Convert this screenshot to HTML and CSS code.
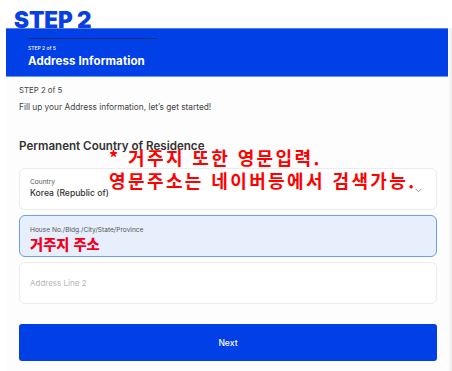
FILE: index.html
```html
<!DOCTYPE html>
<html lang="ko">
<head>
<meta charset="utf-8">
<title>Address Information</title>
<link rel="stylesheet" href="styles.css">
</head>
<body>
<div class="shot">
  <div class="step-title">STEP 2</div>
  <div class="page">
    <header class="bar">
      <div class="bar-line"></div>
      <div class="bar-step">STEP 2 of 5</div>
      <div class="bar-title">Address Information</div>
    </header>
    <main class="content">
      <p class="step">STEP 2 of 5</p>
      <p class="intro">Fill up your Address information, let’s get started!</p>
      <h2 class="section">Permanent Country of Residence</h2>
      <div class="field">
        <div class="label">Country</div>
        <div class="value">Korea (Republic of)</div>
        <svg class="chev" width="7" height="5" viewBox="0 0 7 5"><path d="M0.8 1 L3.5 3.8 L6.2 1" fill="none" stroke="#8a8a8a" stroke-width="0.9"/></svg>
      </div>
      <div class="field active">
        <div class="label">House No./Bldg./City/State/Province</div>
        <div class="value red">거주지 주소</div>
      </div>
      <div class="field empty">
        <div class="placeholder">Address Line 2</div>
      </div>
      <button class="next">Next</button>
    </main>
  </div>
  <div class="note">* 거주지 또한 영문입력.<br>영문주소는 네이버등에서 검색가능.</div>
</div>
</body>
</html>
```
FILE: styles.css
```css
* { box-sizing: border-box; }
html, body { margin: 0; padding: 0; background: #fff; }
body { font-family: Inter, "Noto Sans", "Noto Sans CJK KR", sans-serif; }

.shot { position: relative; width: 452px; height: 371px; overflow: hidden; }

.step-title {
  height: 28px;
  padding-left: 14px;
  padding-top: 6px;
  font-family: Inter, sans-serif;
  font-weight: 900;
  font-size: 22.5px;
  line-height: 28px;
  color: #0a3fe0;
  letter-spacing: -0.1px;
}

.page {
  margin-left: 6px;
  width: 446px;
  height: 343px;
  background: linear-gradient(to right, #fdfdfd 442px, #ececec 446px);
}

.bar {
  position: relative;
  width: 442px;
  height: 49px;
  background: #0040e6;
  border-top: 1px solid #4f7ff0;
  border-bottom: 1px solid #6d95f2;
  padding: 9px 0 0 22px;
  color: #fff;
}
.bar-line { width: 129px; height: 1px; background: #1c2d7a; }
.bar-step { font-size: 5px; line-height: 6px; margin-top: 6px; font-weight: 500; }
.bar-title { font-size: 11.5px; font-weight: 700; line-height: 14px; margin-top: 3px; letter-spacing: 0.1px; }

.content { width: 442px; padding: 0 11px 0 13px; }

.step { margin: 0; padding-top: 7px; font-size: 7.8px; line-height: 12px; color: #444; }
.intro { margin: 5px 0 0; font-size: 8.3px; line-height: 12px; color: #444; }
.section {
  margin: 25px 0 0;
  font-size: 11.6px;
  font-weight: 600;
  line-height: 16px;
  color: #333;
}

.field {
  position: relative;
  height: 42px;
  margin-top: 14px;
  border: 1px solid #ececec;
  border-radius: 6px;
  background: #fff;
  padding: 9px 0 0 10px;
}
.field.active {
  margin-top: 5px;
  background: #e8effc;
  border: 1.5px solid #6a9ff2;
  padding: 10px 0 0 10px;
}
.field.empty { margin-top: 5px; padding-top: 14px; }

.label { font-size: 6.6px; line-height: 9px; color: #555; }
.value { font-size: 8.6px; line-height: 12px; color: #333; font-weight: 500; }
.value.red {
  color: #f2001c;
  font-family: "Noto Sans CJK KR", sans-serif;
  font-weight: 900;
  font-size: 14.3px;
  line-height: 18px;
}
.placeholder { font-size: 8px; line-height: 12px; color: #b5b5b5; }
.chev { position: absolute; right: 14px; top: 19px; }

.next {
  display: block;
  width: 418px;
  height: 37px;
  margin-top: 20px;
  border: none;
  border-radius: 3px;
  background: #0040e6;
  color: #fff;
  font-family: Inter, sans-serif;
  font-size: 8.6px;
  font-weight: 500;
}

.note {
  position: absolute;
  left: 109px;
  top: 146px;
  font-family: "Noto Sans CJK KR", sans-serif;
  font-size: 18px;
  font-weight: 700;
  line-height: 23px;
  letter-spacing: 2.4px;
  color: #ff0000;
  white-space: nowrap;
}
```
